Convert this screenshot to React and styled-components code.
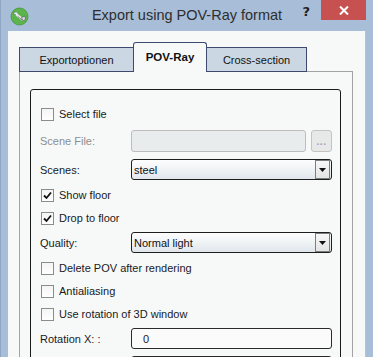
import React from "react";
import styled, { createGlobalStyle } from "styled-components";

const GlobalStyle = createGlobalStyle`
  html, body {
    margin: 0;
    padding: 0;
  }
  body {
    width: 373px;
    height: 357px;
    overflow: hidden;
    background: #a7bdd8;
    font-family: "Liberation Sans", Arial, sans-serif;
    font-size: 11px;
    color: #1a1a1a;
  }
`;

const Window = styled.div`
  display: flex;
  flex-direction: column;
  width: 373px;
  height: 357px;
  box-sizing: border-box;
  border-left: 1px solid #8fa6c2;
  background: #a7bdd8;
`;

const TitleBar = styled.div`
  display: grid;
  grid-template-columns: 1fr auto 1fr;
  height: 31px;
  flex-shrink: 0;
`;

const TitleLeft = styled.div`
  display: flex;
  align-items: flex-start;
  padding: 7px 0 0 9px;
`;

const Title = styled.div`
  align-self: center;
  font-size: 14.5px;
  color: #2e2e2e;
  margin-top: -1px;
`;

const TitleRight = styled.div`
  display: flex;
  justify-content: flex-end;
  align-items: flex-start;
  padding-right: 7px;
`;

const HelpMark = styled.span`
  font-family: "DejaVu Sans", sans-serif;
  font-weight: bold;
  font-size: 13px;
  color: #1f1f1f;
  margin: 4px 11px 0 0;
`;

const CloseButton = styled.div`
  width: 45px;
  height: 20px;
  background: #c75050;
  display: flex;
  align-items: center;
  justify-content: center;
`;

const Client = styled.div`
  flex: 1;
  margin-right: 7px;
  margin-left: 7px;
  background: #f7f9f9;
  border-right: 1px solid #b8c3cc;
  padding: 11px 0 0 11px;
  overflow: hidden;
`;

const TabStrip = styled.div`
  display: flex;
  align-items: flex-end;
  height: 30px;
  margin-bottom: -1px;
  position: relative;
  z-index: 1;
`;

const Tab = styled.div`
  box-sizing: border-box;
  width: ${({ $w }) => $w}px;
  height: ${({ $active }) => ($active ? 30 : 25)}px;
  margin-left: ${({ $first }) => ($first ? 0 : -1)}px;
  border: 1px solid #3d4a6e;
  border-bottom: ${({ $active }) => ($active ? "none" : "1px solid #3d4a6e")};
  border-radius: ${({ $active }) => ($active ? "3px 3px 0 0" : "0")};
  background: ${({ $active }) => ($active ? "#f7f9f9" : "#cbd7e2")};
  font-weight: ${({ $active }) => ($active ? "bold" : "normal")};
  font-size: ${({ $active }) => ($active ? "11.5px" : "11px")};
  color: #111;
  display: flex;
  align-items: center;
  justify-content: center;
  padding-bottom: ${({ $active }) => ($active ? 1 : 0)}px;
  position: relative;
  z-index: ${({ $active }) => ($active ? 2 : 1)};
`;

const Panel = styled.div`
  box-sizing: border-box;
  width: 334px;
  height: 320px;
  border: 1px solid #a3a3a3;
  background: #f7f9f9;
  padding: 17px 11px 0 10px;
`;

const Group = styled.div`
  border: 1px solid #1a1a1a;
  border-radius: 3px;
  padding: 13px 8px 0 9px;
  height: 300px;
`;

const Row = styled.div`
  display: flex;
  align-items: center;
  height: ${({ $h }) => $h || 22}px;
  margin-top: ${({ $mt }) => $mt || 0}px;
`;

const Label = styled.span`
  width: 91px;
  flex-shrink: 0;
  color: ${({ $disabled }) => ($disabled ? "#8e8e8e" : "#1a1a1a")};
`;

const CheckBox = styled.span`
  box-sizing: border-box;
  width: 13px;
  height: 13px;
  margin: 0 5px 0 1px;
  border: 1px solid #8c8c8c;
  background: linear-gradient(#f4f4f4, #ffffff);
  display: flex;
  align-items: center;
  justify-content: center;
`;

const TextField = styled.div`
  box-sizing: border-box;
  flex: 1;
  height: 100%;
  border: 1px solid ${({ $disabled }) => ($disabled ? "#bdbdbd" : "#2a2a2a")};
  border-radius: 3px;
  background: ${({ $disabled }) => ($disabled ? "#e9ecec" : "#fbfbfb")};
  padding-left: 11px;
  display: flex;
  align-items: center;
`;

const BrowseButton = styled.div`
  box-sizing: border-box;
  width: 21px;
  height: 100%;
  margin-left: 5px;
  border: 1px solid #c3c3c3;
  border-radius: 3px;
  background: #e7e9e9;
  color: #a99bc2;
  font-size: 10px;
  font-weight: bold;
  display: flex;
  align-items: center;
  justify-content: center;
  letter-spacing: 0.5px;
`;

const Select = styled.div`
  box-sizing: border-box;
  flex: 1;
  height: 100%;
  border: 1px solid #1e1e1e;
  border-radius: 3px;
  background: linear-gradient(#fdfdfd, #f0f3f5 50%, #dfe6ec);
  display: flex;
  align-items: center;
  padding-left: 2px;
  color: #111;
`;

const SelectValue = styled.span`
  flex: 1;
`;

const ArrowBox = styled.span`
  box-sizing: border-box;
  width: 15px;
  height: 19px;
  margin-right: 1px;
  border: 1px solid #7d7d7d;
  background: linear-gradient(#f7f7f7, #e4e4e4);
  display: flex;
  align-items: center;
  justify-content: center;
`;

const AppIcon = () => (
  <svg width="19" height="19" viewBox="0 0 19 19">
    <circle cx="9.5" cy="9.5" r="8.5" fill="#5cb54c" stroke="#3f9a36" strokeWidth="0.8" />
    <path d="M3 7 L6 4.5 L8 6.5 L7 8 Z" fill="#f2f2f2" stroke="#6b6f75" strokeWidth="0.7" />
    <path d="M7 8 L12.5 12.5" stroke="#e6e8ea" strokeWidth="2.6" strokeLinecap="round" />
    <path d="M7.5 9.2 L12 13" stroke="#6b6f75" strokeWidth="0.8" />
    <path d="M11.5 10.5 L15 9 L15.5 12.5 L13 14 Z" fill="#d9dcdf" stroke="#55595e" strokeWidth="0.7" />
  </svg>
);

const CloseGlyph = () => (
  <svg width="10" height="9" viewBox="0 0 10 9">
    <path d="M1 0.5 L9 8.5 M9 0.5 L1 8.5" stroke="#ffffff" strokeWidth="2" />
  </svg>
);

const CheckMark = () => (
  <svg width="9" height="9" viewBox="0 0 9 9">
    <path d="M1 4.5 L3.5 7 L8 1.5" fill="none" stroke="#111" strokeWidth="1.8" />
  </svg>
);

const DownArrow = () => (
  <svg width="7" height="4" viewBox="0 0 7 4">
    <path d="M0 0 L7 0 L3.5 4 Z" fill="#111" />
  </svg>
);

const CheckRow = ({ checked, mt, label }) => (
  <Row $mt={mt}>
    <CheckBox>{checked && <CheckMark />}</CheckBox>
    <span>{label}</span>
  </Row>
);

const SelectRow = ({ mt, label, value }) => (
  <Row $mt={mt} $h={21}>
    <Label>{label}</Label>
    <Select>
      <SelectValue>{value}</SelectValue>
      <ArrowBox>
        <DownArrow />
      </ArrowBox>
    </Select>
  </Row>
);

const tabs = [
  { name: "Exportoptionen", w: 115 },
  { name: "POV-Ray", w: 74, active: true },
  { name: "Cross-section", w: 101 },
];

export default function App() {
  return (
    <>
      <GlobalStyle />
      <Window>
        <TitleBar>
          <TitleLeft>
            <AppIcon />
          </TitleLeft>
          <Title>Export using POV-Ray format</Title>
          <TitleRight>
            <HelpMark>?</HelpMark>
            <CloseButton>
              <CloseGlyph />
            </CloseButton>
          </TitleRight>
        </TitleBar>
        <Client>
          <TabStrip>
            {tabs.map((t, i) => (
              <Tab key={t.name} $w={t.w} $active={t.active} $first={i === 0}>
                {t.name}
              </Tab>
            ))}
          </TabStrip>
          <Panel>
            <Group>
              <CheckRow label="Select file" />
              <Row $mt={5}>
                <Label $disabled>Scene File:</Label>
                <TextField $disabled />
                <BrowseButton>...</BrowseButton>
              </Row>
              <SelectRow mt={7} label="Scenes:" value="steel" />
              <CheckRow mt={4} checked label="Show floor" />
              <CheckRow mt={1} checked label="Drop to floor" />
              <SelectRow mt={3} label="Quality:" value="Normal light" />
              <CheckRow mt={4} label="Delete POV after rendering" />
              <CheckRow mt={1} label="Antialiasing" />
              <CheckRow mt={1} label="Use rotation of 3D window" />
              <Row $mt={3} $h={21}>
                <Label>Rotation X: :</Label>
                <TextField>0</TextField>
              </Row>
              <Row $mt={7} $h={21}>
                <Label />
                <TextField />
              </Row>
            </Group>
          </Panel>
        </Client>
      </Window>
    </>
  );
}
